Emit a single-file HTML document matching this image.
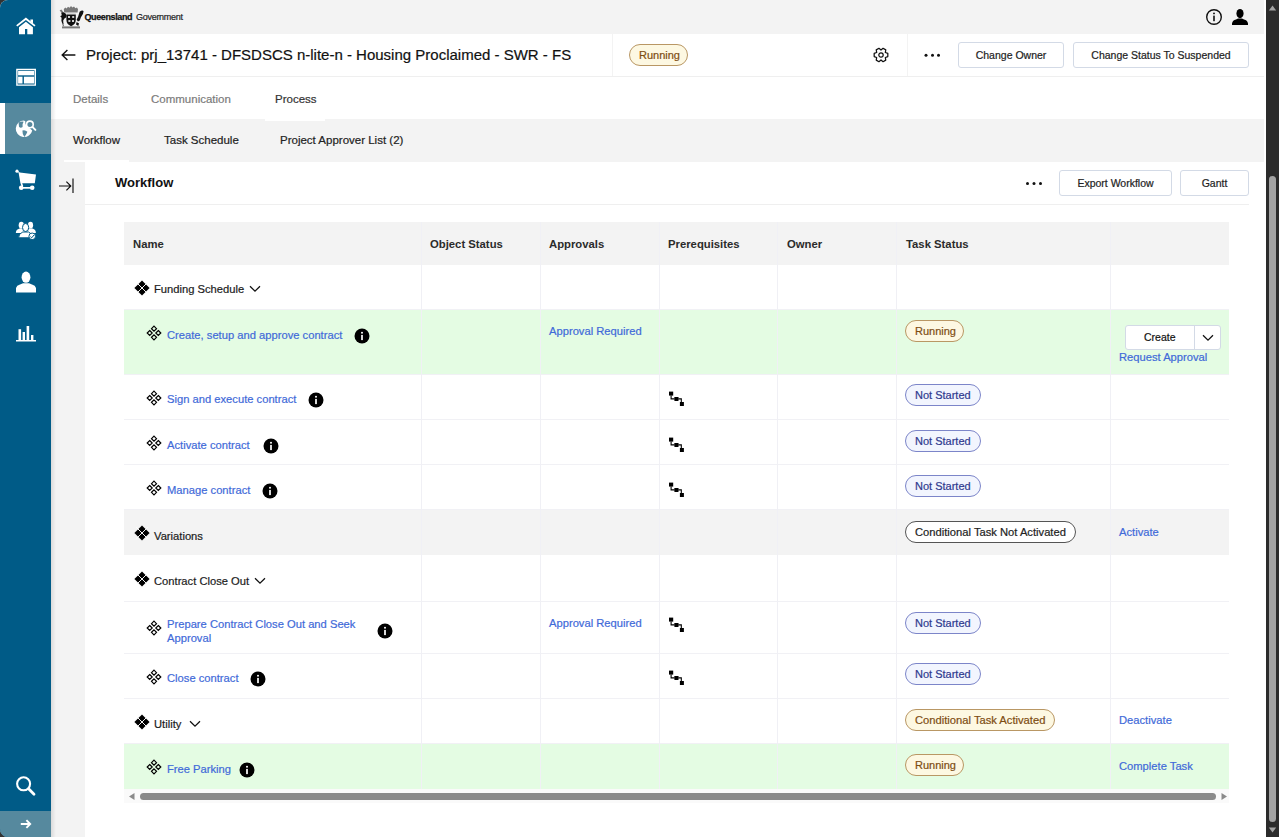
<!DOCTYPE html><html><head><meta charset='utf-8'><style>
*{box-sizing:border-box}
html,body{margin:0;padding:0}
body{width:1279px;height:837px;overflow:hidden;position:relative;background:#333;font-family:'Liberation Sans',sans-serif;color:#222;-webkit-text-stroke:0.2px currentColor}
.abs{position:absolute}
.t{position:absolute;white-space:nowrap;line-height:1}
.lk{color:#3f6ad9}
.badge{position:absolute;height:22px;border-radius:11px;border:1px solid;font-size:11px;line-height:20px;padding:0 9px;white-space:nowrap}
.run{background:#fdf8e2;border-color:#b99764;color:#7e4d12}
.ns{background:#f2f5fe;border-color:#7c85c9;color:#2f3a8f}
.cna{background:#fff;border-color:#555;color:#222}
.btn{position:absolute;background:#fff;border:1px solid #d3dae6;border-radius:3px;font-size:10.5px;color:#222;text-align:center}
.vl{position:absolute;width:1px;background:#f0f0f5}
.hl{position:absolute;height:1px;background:#f1f1f5}
</style></head><body>
<div class='abs' style='left:0;top:0;width:1279px;height:837px;background:#fff;border-radius:8px 0 0 8px'></div>
<div class='abs' style='left:51px;top:0;width:1213px;height:837px;background:#f3f3f3'></div>
<div class='abs' style='left:1264px;top:0;width:2px;height:837px;background:#fff'></div>
<div class='abs' style='left:51px;top:34px;width:1213px;height:42px;background:#fff'></div>
<div class='abs' style='left:51px;top:76px;width:1213px;height:1px;background:#efefef'></div>
<div class='abs' style='left:51px;top:77px;width:1213px;height:42px;background:#fff'></div>
<div class='abs' style='left:85px;top:162px;width:1179px;height:675px;background:#fff'></div>
<div class='abs' style='left:265px;top:119px;width:60px;height:1.5px;background:#fff'></div>
<div class='abs' style='left:64px;top:160px;width:65px;height:2px;background:#fff'></div>
<div class='abs' style='left:0;top:0;width:51px;height:837px;background:#005b87;border-radius:8px 0 0 8px;overflow:hidden'>
<div class='abs' style='left:0;top:103px;width:51px;height:51px;background:#56899e'></div>
<div class='abs' style='left:0;top:103px;width:5px;height:51px;background:#fff'></div>
<div class='abs' style='left:0;top:811px;width:51px;height:26px;background:#56899e'></div>
</div>
<div class='abs' style='left:51px;top:0;width:5px;height:837px;background:linear-gradient(90deg,rgba(0,0,0,.10),rgba(0,0,0,0))'></div>

<svg class='abs' style='left:0;top:0' width='51' height='837' viewBox='0 0 51 837'>
 <g fill='#fff' stroke='none'>
  <!-- home -->
  <path d='M16.2 25.2 L25.9 17.6 L35.5 25.2 L34.4 26.6 L25.9 20 L17.3 26.6 Z'/>
  <path d='M30.4 19.4 H33 V23.4 L30.4 21.4 Z'/>
  <path d='M19 27.2 L25.9 21.8 L32.9 27.2 V34.3 H27.3 V29 H25 V34.3 H19 Z'/>
  <!-- layout -->
  <path fill-rule='evenodd' d='M16.2 68.8 H36 V85.8 H16.2 Z M17.6 70.2 V84.4 H34.6 V70.2 Z'/>
  <rect x='18.1' y='71' width='16' height='4.3'/>
  <rect x='18.1' y='76.7' width='4.4' height='6.8'/>
  <rect x='23.9' y='76.7' width='10.2' height='6.8'/>
  <!-- cart -->
  <circle cx='17' cy='171.2' r='1.6'/>
  <path d='M17 170.4 L19.8 172.6 L36 174.4 L34.8 183.2 L22.2 183.2 L23.2 186 L21.6 186.6 L20.4 183 L18.6 172.8 Z'/>
  <circle cx='21.2' cy='187.8' r='2.3'/>
  <circle cx='32.2' cy='187.8' r='2.3'/>
  <rect x='21' y='187' width='11' height='1.7'/>
  <!-- people -->
  <ellipse cx='21.3' cy='225.2' rx='2.6' ry='3.4'/>
  <path d='M15.8 233 Q16 229.6 19.5 228.6 L23.5 228.6 Q26 229.6 26 233 Z'/>
  <ellipse cx='30.5' cy='225.2' rx='2.6' ry='3.4'/>
  <path d='M25.8 233 Q26 229.6 28.7 228.6 L32.6 228.6 Q35.8 229.6 35.9 233 Z'/>
  <ellipse cx='25.6' cy='227.5' rx='3.1' ry='4' stroke='#005b87' stroke-width='1'/>
  <path d='M18.5 237.8 Q18.8 233.4 22.8 232 L28.6 232 Q32.4 233.4 32.7 237.8 Z' stroke='#005b87' stroke-width='1'/>
  <circle cx='32.2' cy='236.3' r='3.3' stroke='#005b87' stroke-width='1'/>
  <path d='M30.4 236.6 L31.7 237.8 L34 235' fill='none' stroke='#005b87' stroke-width='1'/>
  <!-- user -->
  <ellipse cx='26' cy='277.2' rx='4.4' ry='5.6'/>
  <path d='M16 292.6 V288 Q16.6 285.6 20 284.6 L23 283.3 H29 L32 284.6 Q35.4 285.6 36 288 V292.6 Z'/>
  <!-- chart -->
  <rect x='16' y='340' width='20' height='1.5'/>
  <rect x='18.5' y='329.2' width='2.6' height='11'/>
  <rect x='22.6' y='332' width='2.4' height='8.5'/>
  <rect x='26.6' y='326' width='2.6' height='14.5'/>
  <rect x='31' y='335' width='2.4' height='5.5'/>
 </g>
 <g fill='none' stroke='#fff'>
  <!-- search -->
  <circle cx='23.6' cy='783.8' r='6.5' stroke-width='2.1'/>
  <path d='M28.6 788.8 L34 794.2' stroke-width='2.8' stroke-linecap='round'/>
  <!-- arrow -->
  <path d='M20.8 824 H30.2 M26.4 820.2 L30.2 824 L26.4 827.8' stroke-width='1.9'/>
  <!-- globe magnifier -->
  <circle cx='29.9' cy='124.4' r='3.3' stroke-width='1.6'/>
  <path d='M32.4 126.9 L35.4 129.9' stroke-width='2' stroke-linecap='round'/>
 </g>
 <path fill='#fff' d='M24 120.5 A8.3 8.3 0 1 0 32.2 130.4 L27.6 126.2 A4.6 4.6 0 0 1 25.4 121.4 Z'/>
 <path fill='#56899e' d='M18.6 122.6 Q21.5 121 23.6 121.8 Q22 124 22.6 127 Q20.6 128.6 19 126.8 Z M22.4 130.6 Q25 129.6 27.4 131.8 Q26.4 134.6 24.4 137 Q22.2 134 22.4 130.6 Z'/>
</svg>

<svg class='abs' style='left:57px;top:4px' width='30' height='27' viewBox='0 0 30 27'>
<g fill='#777'>
<path d='M7.2 8.4 L6.8 5 L8.4 3.6 L9.6 4.6 L11 2.8 L12.6 3.8 L14 2 L15.4 3.6 L17 2.6 L18.4 4.2 L20 3.4 L21 5.2 L20.6 8.4 Z'/>
<path d='M2.6 6.4 L4.4 5.6 L6.6 8.6 L5.4 9.6 Z'/>
<path d='M5 22.4 H23 V24.4 H5 Z'/>
<path d='M5.4 19 Q4.8 21.6 6.4 22.6 L7.2 21.8 Q6.2 20.8 6.8 19 Z'/>
<path d='M21.6 19 Q22.6 21.4 21.2 22.6 L20.4 21.8 Q21.2 20.6 20.6 19 Z'/>
</g>
<g fill='#111'>
<path d='M4.2 8.8 L6.4 8.2 L8.6 9.6 L9.6 11.6 L9 13.6 L7.4 14.4 L6.2 16.6 L6.4 19.4 L5.2 19.6 L4.4 16.8 L4.6 13.8 L3.2 12.2 L4.8 11.2 Z'/>
<path d='M22.6 7.8 Q25.4 5.6 26.6 7.2 Q26.4 10.6 23.8 13.4 L22.8 16.4 L21 17.6 L19.6 15.8 L21.2 12.6 Z'/>
<path d='M9.4 10.4 H18.8 V15.6 Q18.8 20.6 14.1 22.2 Q9.4 20.6 9.4 15.6 Z'/>
<path d='M19.6 18 L22 19.6 L20.8 21.4 L19 20.4 Z'/>
</g>
<g fill='#cfcfcf'>
<path d='M11 12 h2 v2 h-2 Z M15.2 12 h2 v2 h-2 Z M11.4 16 h2 v2 h-2 Z M15 16 h2 v2 h-2 Z'/>
<rect x='9.4' y='8.8' width='9.4' height='0.9'/>
</g>
</svg>
<span class='t' style='left:84.5px;top:13px;font-size:9px;font-weight:bold;color:#111;letter-spacing:-0.38px;-webkit-text-stroke:0.25px'>Queensland</span>
<span class='t' style='left:136px;top:13px;font-size:9px;color:#222;letter-spacing:-0.28px'>Government</span>
<svg class='abs' style='left:1204px;top:7px' width='20' height='20' viewBox='0 0 20 20'>
<circle cx='10' cy='10' r='7.3' fill='none' stroke='#111' stroke-width='1.4'/>
<rect x='9.2' y='8.6' width='1.6' height='5.6' fill='#111'/><circle cx='10' cy='6.4' r='0.95' fill='#111'/></svg>
<svg class='abs' style='left:1230px;top:8px' width='20' height='18' viewBox='0 0 20 18'>
<ellipse cx='10' cy='5.6' rx='3.6' ry='4.6' fill='#000'/>
<path d='M2 17 V15.4 Q2.6 12.4 6 11.6 L8 10.6 H12 L14 11.6 Q17.4 12.4 18 15.4 V17 Z' fill='#000'/></svg>
<svg class='abs' style='left:60px;top:48px' width='17' height='14' viewBox='0 0 17 14'>
<path d='M15.4 7 H2.4 M7.4 2 L2.2 7 L7.4 12' fill='none' stroke='#111' stroke-width='1.4'/></svg>
<span class='t' style='left:86px;top:47px;font-size:15px;color:#111'>Project: prj_13741 - DFSDSCS n-lite-n - Housing Proclaimed - SWR - FS</span>
<div class='vl' style='left:612px;top:34px;height:42px;background:#f3f3f3'></div>
<div class='vl' style='left:907px;top:34px;height:42px;background:#f3f3f3'></div>
<div class='badge run' style='left:629px;top:44px;width:59px'>Running</div>
<svg class='abs' style='left:872px;top:46px' width='18' height='18' viewBox='0 0 18 18'>
<path fill='none' stroke='#111' stroke-width='1.25' stroke-linejoin='round' d='M13.33 6.50 L15.82 7.43 L15.82 10.57 L13.33 11.50 L13.77 14.12 L11.05 15.69 L9.00 14.00 L6.95 15.69 L4.23 14.12 L4.67 11.50 L2.18 10.57 L2.18 7.43 L4.67 6.50 L4.23 3.88 L6.95 2.31 L9.00 4.00 L11.05 2.31 L13.77 3.88 Z'/>
<circle cx='9' cy='9' r='2.2' fill='none' stroke='#111' stroke-width='1.2'/></svg>
<svg class='abs' style='left:920px;top:50px' width='24' height='10' viewBox='0 0 24 10'>
<circle cx='6' cy='5.2' r='1.5' fill='#111'/><circle cx='12.5' cy='5.2' r='1.5' fill='#111'/><circle cx='18.5' cy='5.2' r='1.5' fill='#111'/></svg>
<div class='btn' style='left:958px;top:42px;width:106px;height:26px;line-height:24px'>Change Owner</div>
<div class='btn' style='left:1073px;top:42px;width:176px;height:26px;line-height:24px'>Change Status To Suspended</div>
<span class='t' style='left:73px;top:94px;font-size:11.5px;color:#7b7b7b'>Details</span>
<span class='t' style='left:151px;top:94px;font-size:11.5px;color:#7b7b7b'>Communication</span>
<span class='t' style='left:275px;top:94px;font-size:11.5px;color:#333'>Process</span>
<span class='t' style='left:73px;top:135px;font-size:11.5px;color:#222'>Workflow</span>
<span class='t' style='left:164px;top:135px;font-size:11.5px;color:#222'>Task Schedule</span>
<span class='t' style='left:280px;top:135px;font-size:11.5px;color:#222'>Project Approver List (2)</span>
<svg class='abs' style='left:57px;top:177px' width='18' height='17' viewBox='0 0 18 17'>
<path d='M2 9 H13.6 M9.4 4.6 L13.8 9 L9.4 13.4 M16 1.6 V16' fill='none' stroke='#111' stroke-width='1.15'/></svg>
<span class='t' style='left:115px;top:176px;font-size:13px;font-weight:bold;color:#111;-webkit-text-stroke:0'>Workflow</span>
<svg class='abs' style='left:1022px;top:178px' width='24' height='10' viewBox='0 0 24 10'>
<circle cx='5.5' cy='5.5' r='1.5' fill='#111'/><circle cx='12' cy='5.5' r='1.5' fill='#111'/><circle cx='18.5' cy='5.5' r='1.5' fill='#111'/></svg>
<div class='btn' style='left:1059px;top:170px;width:113px;height:26px;line-height:24px'>Export Workflow</div>
<div class='btn' style='left:1180px;top:170px;width:69px;height:26px;line-height:24px'>Gantt</div>
<div class='hl' style='left:85px;top:204px;width:1164px;background:#efefef'></div>
<div class='abs' style='left:124px;top:222px;width:1105px;height:43px;background:#f3f3f3'></div>
<span class='t' style='left:133px;top:239px;font-size:11.3px;font-weight:bold;color:#2b2b2b;-webkit-text-stroke:0'>Name</span>
<span class='t' style='left:430px;top:239px;font-size:11.3px;font-weight:bold;color:#2b2b2b;-webkit-text-stroke:0'>Object Status</span>
<span class='t' style='left:549px;top:239px;font-size:11.3px;font-weight:bold;color:#2b2b2b;-webkit-text-stroke:0'>Approvals</span>
<span class='t' style='left:668px;top:239px;font-size:11.3px;font-weight:bold;color:#2b2b2b;-webkit-text-stroke:0'>Prerequisites</span>
<span class='t' style='left:787px;top:239px;font-size:11.3px;font-weight:bold;color:#2b2b2b;-webkit-text-stroke:0'>Owner</span>
<span class='t' style='left:906px;top:239px;font-size:11.3px;font-weight:bold;color:#2b2b2b;-webkit-text-stroke:0'>Task Status</span>
<div class='abs' style='left:124px;top:310px;width:1105px;height:65px;background:#e4fce3'></div>
<div class='abs' style='left:124px;top:510px;width:1105px;height:45px;background:#f3f3f3'></div>
<div class='abs' style='left:124px;top:744px;width:1105px;height:45px;background:#e4fce3'></div>
<div class='hl' style='left:124px;top:309px;width:1105px'></div>
<div class='hl' style='left:124px;top:374px;width:1105px'></div>
<div class='hl' style='left:124px;top:419px;width:1105px'></div>
<div class='hl' style='left:124px;top:464px;width:1105px'></div>
<div class='hl' style='left:124px;top:509px;width:1105px'></div>
<div class='hl' style='left:124px;top:601px;width:1105px'></div>
<div class='hl' style='left:124px;top:653px;width:1105px'></div>
<div class='hl' style='left:124px;top:698px;width:1105px'></div>
<div class='hl' style='left:124px;top:743px;width:1105px'></div>
<div class='vl' style='left:421px;top:222px;height:567px'></div>
<div class='vl' style='left:540px;top:222px;height:567px'></div>
<div class='vl' style='left:659px;top:222px;height:567px'></div>
<div class='vl' style='left:777px;top:222px;height:567px'></div>
<div class='vl' style='left:896px;top:222px;height:567px'></div>
<div class='vl' style='left:1110px;top:222px;height:567px'></div>
<svg class='abs' style='left:133.6px;top:279.9px' width='16' height='16' viewBox='0 0 16 16'><path fill='#000' d='M8 0.4 L15.6 8 L8 15.6 L0.4 8 Z'/><path d='M8 0 V16 M0 8 H16' stroke='#fff' stroke-width='0.9' transform='rotate(45 8 8)'/></svg>
<span class='t' style='left:154px;top:284px;font-size:11.2px;color:#1c1c1c'>Funding Schedule</span>
<svg class='abs' style='left:249px;top:284.5px' width='12' height='8' viewBox='0 0 12 8'><path d='M1 1.2 L6 6.2 L11 1.2' fill='none' stroke='#111' stroke-width='1.25'/></svg>
<svg class='abs' style='left:145.8px;top:324.7px' width='16' height='16' viewBox='0 0 16 16'><g fill='none' stroke='#000' stroke-width='1.2'><path d='M8 1.20 L10.50 3.7 L8 6.20 L5.50 3.7 Z'/><path d='M8 9.80 L10.50 12.3 L8 14.80 L5.50 12.3 Z'/><path d='M3.7 5.50 L6.20 8 L3.7 10.50 L1.20 8 Z'/><path d='M12.3 5.50 L14.80 8 L12.3 10.50 L9.80 8 Z'/></g></svg>
<span class='t lk' style='left:167px;top:330px;font-size:11.2px'>Create, setup and approve contract</span>
<svg class='abs' style='left:354px;top:327.6px' width='16' height='16' viewBox='0 0 16 16'><circle cx='8' cy='8' r='7.5' fill='#000'/><rect x='7.15' y='6.9' width='1.7' height='5.2' fill='#fff'/><circle cx='8' cy='4.8' r='1' fill='#fff'/></svg>
<span class='t lk' style='left:549px;top:326px;font-size:11.2px'>Approval Required</span>
<div class='badge run' style='left:905px;top:320.3px;width:59px'>Running</div>
<div class='btn' style='left:1125px;top:324.5px;width:96px;height:25px'></div>
<div class='vl' style='left:1194px;top:325px;height:24px;background:#d3dae6'></div>
<span class='t' style='left:1144px;top:332px;font-size:10.5px;color:#111'>Create</span>
<svg class='abs' style='left:1202px;top:334px' width='12' height='8' viewBox='0 0 12 8'><path d='M1 1.2 L6 6.2 L11 1.2' fill='none' stroke='#111' stroke-width='1.25'/></svg>
<span class='t lk' style='left:1119px;top:352px;font-size:11.2px'>Request Approval</span>
<svg class='abs' style='left:145.8px;top:389.7px' width='16' height='16' viewBox='0 0 16 16'><g fill='none' stroke='#000' stroke-width='1.2'><path d='M8 1.20 L10.50 3.7 L8 6.20 L5.50 3.7 Z'/><path d='M8 9.80 L10.50 12.3 L8 14.80 L5.50 12.3 Z'/><path d='M3.7 5.50 L6.20 8 L3.7 10.50 L1.20 8 Z'/><path d='M12.3 5.50 L14.80 8 L12.3 10.50 L9.80 8 Z'/></g></svg>
<span class='t lk' style='left:167px;top:394px;font-size:11.2px'>Sign and execute contract</span>
<svg class='abs' style='left:308.4px;top:391.6px' width='16' height='16' viewBox='0 0 16 16'><circle cx='8' cy='8' r='7.5' fill='#000'/><rect x='7.15' y='6.9' width='1.7' height='5.2' fill='#fff'/><circle cx='8' cy='4.8' r='1' fill='#fff'/></svg>
<svg class='abs' style='left:668px;top:391px' width='16' height='16' viewBox='0 0 16 16'><g fill='#000'><rect x='1' y='0.6' width='4.2' height='4'/><rect x='6.3' y='6' width='4.3' height='3.9' rx='0.6'/><rect x='11.9' y='11' width='4' height='4'/></g><path d='M3.1 4.4 V7.9 H6.5 M10.4 7.9 H13.3 V11.2' fill='none' stroke='#000' stroke-width='1.1'/></svg>
<div class='badge ns' style='left:905px;top:384.3px;width:76px'>Not Started</div>
<svg class='abs' style='left:145.8px;top:434.9px' width='16' height='16' viewBox='0 0 16 16'><g fill='none' stroke='#000' stroke-width='1.2'><path d='M8 1.20 L10.50 3.7 L8 6.20 L5.50 3.7 Z'/><path d='M8 9.80 L10.50 12.3 L8 14.80 L5.50 12.3 Z'/><path d='M3.7 5.50 L6.20 8 L3.7 10.50 L1.20 8 Z'/><path d='M12.3 5.50 L14.80 8 L12.3 10.50 L9.80 8 Z'/></g></svg>
<span class='t lk' style='left:167px;top:440px;font-size:11.2px'>Activate contract</span>
<svg class='abs' style='left:262.6px;top:437.6px' width='16' height='16' viewBox='0 0 16 16'><circle cx='8' cy='8' r='7.5' fill='#000'/><rect x='7.15' y='6.9' width='1.7' height='5.2' fill='#fff'/><circle cx='8' cy='4.8' r='1' fill='#fff'/></svg>
<svg class='abs' style='left:668px;top:437px' width='16' height='16' viewBox='0 0 16 16'><g fill='#000'><rect x='1' y='0.6' width='4.2' height='4'/><rect x='6.3' y='6' width='4.3' height='3.9' rx='0.6'/><rect x='11.9' y='11' width='4' height='4'/></g><path d='M3.1 4.4 V7.9 H6.5 M10.4 7.9 H13.3 V11.2' fill='none' stroke='#000' stroke-width='1.1'/></svg>
<div class='badge ns' style='left:905px;top:430.3px;width:76px'>Not Started</div>
<svg class='abs' style='left:145.8px;top:480.2px' width='16' height='16' viewBox='0 0 16 16'><g fill='none' stroke='#000' stroke-width='1.2'><path d='M8 1.20 L10.50 3.7 L8 6.20 L5.50 3.7 Z'/><path d='M8 9.80 L10.50 12.3 L8 14.80 L5.50 12.3 Z'/><path d='M3.7 5.50 L6.20 8 L3.7 10.50 L1.20 8 Z'/><path d='M12.3 5.50 L14.80 8 L12.3 10.50 L9.80 8 Z'/></g></svg>
<span class='t lk' style='left:167px;top:485px;font-size:11.2px'>Manage contract</span>
<svg class='abs' style='left:262.1px;top:482.6px' width='16' height='16' viewBox='0 0 16 16'><circle cx='8' cy='8' r='7.5' fill='#000'/><rect x='7.15' y='6.9' width='1.7' height='5.2' fill='#fff'/><circle cx='8' cy='4.8' r='1' fill='#fff'/></svg>
<svg class='abs' style='left:668px;top:482px' width='16' height='16' viewBox='0 0 16 16'><g fill='#000'><rect x='1' y='0.6' width='4.2' height='4'/><rect x='6.3' y='6' width='4.3' height='3.9' rx='0.6'/><rect x='11.9' y='11' width='4' height='4'/></g><path d='M3.1 4.4 V7.9 H6.5 M10.4 7.9 H13.3 V11.2' fill='none' stroke='#000' stroke-width='1.1'/></svg>
<div class='badge ns' style='left:905px;top:475.3px;width:76px'>Not Started</div>
<svg class='abs' style='left:133.6px;top:525.4px' width='16' height='16' viewBox='0 0 16 16'><path fill='#000' d='M8 0.4 L15.6 8 L8 15.6 L0.4 8 Z'/><path d='M8 0 V16 M0 8 H16' stroke='#fff' stroke-width='0.9' transform='rotate(45 8 8)'/></svg>
<span class='t' style='left:154px;top:531px;font-size:11.2px;color:#1c1c1c'>Variations</span>
<div class='badge cna' style='left:905px;top:521.3px;width:171px;font-size:11.2px'>Conditional Task Not Activated</div>
<span class='t lk' style='left:1119px;top:527px;font-size:11.2px'>Activate</span>
<svg class='abs' style='left:133.6px;top:571.1px' width='16' height='16' viewBox='0 0 16 16'><path fill='#000' d='M8 0.4 L15.6 8 L8 15.6 L0.4 8 Z'/><path d='M8 0 V16 M0 8 H16' stroke='#fff' stroke-width='0.9' transform='rotate(45 8 8)'/></svg>
<span class='t' style='left:154px;top:576px;font-size:11.2px;color:#1c1c1c'>Contract Close Out</span>
<svg class='abs' style='left:253.5px;top:576.5px' width='12' height='8' viewBox='0 0 12 8'><path d='M1 1.2 L6 6.2 L11 1.2' fill='none' stroke='#111' stroke-width='1.25'/></svg>
<svg class='abs' style='left:145.8px;top:620.1px' width='16' height='16' viewBox='0 0 16 16'><g fill='none' stroke='#000' stroke-width='1.2'><path d='M8 1.20 L10.50 3.7 L8 6.20 L5.50 3.7 Z'/><path d='M8 9.80 L10.50 12.3 L8 14.80 L5.50 12.3 Z'/><path d='M3.7 5.50 L6.20 8 L3.7 10.50 L1.20 8 Z'/><path d='M12.3 5.50 L14.80 8 L12.3 10.50 L9.80 8 Z'/></g></svg>
<span class='t lk' style='left:167px;top:618px;font-size:11.2px;line-height:13.6px;white-space:normal;width:200px'>Prepare Contract Close Out and Seek<br>Approval</span>
<svg class='abs' style='left:377px;top:622.6px' width='16' height='16' viewBox='0 0 16 16'><circle cx='8' cy='8' r='7.5' fill='#000'/><rect x='7.15' y='6.9' width='1.7' height='5.2' fill='#fff'/><circle cx='8' cy='4.8' r='1' fill='#fff'/></svg>
<span class='t lk' style='left:549px;top:618px;font-size:11.2px'>Approval Required</span>
<svg class='abs' style='left:668px;top:616.5px' width='16' height='16' viewBox='0 0 16 16'><g fill='#000'><rect x='1' y='0.6' width='4.2' height='4'/><rect x='6.3' y='6' width='4.3' height='3.9' rx='0.6'/><rect x='11.9' y='11' width='4' height='4'/></g><path d='M3.1 4.4 V7.9 H6.5 M10.4 7.9 H13.3 V11.2' fill='none' stroke='#000' stroke-width='1.1'/></svg>
<div class='badge ns' style='left:905px;top:611.6px;width:76px'>Not Started</div>
<svg class='abs' style='left:145.8px;top:668.5px' width='16' height='16' viewBox='0 0 16 16'><g fill='none' stroke='#000' stroke-width='1.2'><path d='M8 1.20 L10.50 3.7 L8 6.20 L5.50 3.7 Z'/><path d='M8 9.80 L10.50 12.3 L8 14.80 L5.50 12.3 Z'/><path d='M3.7 5.50 L6.20 8 L3.7 10.50 L1.20 8 Z'/><path d='M12.3 5.50 L14.80 8 L12.3 10.50 L9.80 8 Z'/></g></svg>
<span class='t lk' style='left:167px;top:673px;font-size:11.2px'>Close contract</span>
<svg class='abs' style='left:249.60000000000002px;top:670.6px' width='16' height='16' viewBox='0 0 16 16'><circle cx='8' cy='8' r='7.5' fill='#000'/><rect x='7.15' y='6.9' width='1.7' height='5.2' fill='#fff'/><circle cx='8' cy='4.8' r='1' fill='#fff'/></svg>
<svg class='abs' style='left:668px;top:670px' width='16' height='16' viewBox='0 0 16 16'><g fill='#000'><rect x='1' y='0.6' width='4.2' height='4'/><rect x='6.3' y='6' width='4.3' height='3.9' rx='0.6'/><rect x='11.9' y='11' width='4' height='4'/></g><path d='M3.1 4.4 V7.9 H6.5 M10.4 7.9 H13.3 V11.2' fill='none' stroke='#000' stroke-width='1.1'/></svg>
<div class='badge ns' style='left:905px;top:663.3px;width:76px'>Not Started</div>
<svg class='abs' style='left:133.6px;top:713.6px' width='16' height='16' viewBox='0 0 16 16'><path fill='#000' d='M8 0.4 L15.6 8 L8 15.6 L0.4 8 Z'/><path d='M8 0 V16 M0 8 H16' stroke='#fff' stroke-width='0.9' transform='rotate(45 8 8)'/></svg>
<span class='t' style='left:154px;top:719px;font-size:11.2px;color:#1c1c1c'>Utility</span>
<svg class='abs' style='left:188.5px;top:719.5px' width='12' height='8' viewBox='0 0 12 8'><path d='M1 1.2 L6 6.2 L11 1.2' fill='none' stroke='#111' stroke-width='1.25'/></svg>
<div class='badge run' style='left:905px;top:709.3px;width:150px;font-size:11.2px'>Conditional Task Activated</div>
<span class='t lk' style='left:1119px;top:715px;font-size:11.2px'>Deactivate</span>
<svg class='abs' style='left:145.8px;top:759.4px' width='16' height='16' viewBox='0 0 16 16'><g fill='none' stroke='#000' stroke-width='1.2'><path d='M8 1.20 L10.50 3.7 L8 6.20 L5.50 3.7 Z'/><path d='M8 9.80 L10.50 12.3 L8 14.80 L5.50 12.3 Z'/><path d='M3.7 5.50 L6.20 8 L3.7 10.50 L1.20 8 Z'/><path d='M12.3 5.50 L14.80 8 L12.3 10.50 L9.80 8 Z'/></g></svg>
<span class='t lk' style='left:167px;top:764px;font-size:11.2px'>Free Parking</span>
<svg class='abs' style='left:239.3px;top:761.6px' width='16' height='16' viewBox='0 0 16 16'><circle cx='8' cy='8' r='7.5' fill='#000'/><rect x='7.15' y='6.9' width='1.7' height='5.2' fill='#fff'/><circle cx='8' cy='4.8' r='1' fill='#fff'/></svg>
<div class='badge run' style='left:905px;top:754.3px;width:59px'>Running</div>
<span class='t lk' style='left:1119px;top:761px;font-size:11.2px'>Complete Task</span>
<div class='abs' style='left:124px;top:789px;width:1105px;height:14px;background:#fafafa'></div>
<div class='abs' style='left:140px;top:792.5px;width:1076px;height:7.5px;border-radius:4px;background:#8a8a8a'></div>
<svg class='abs' style='left:128px;top:792px' width='8' height='9'><path d='M6.5 1 V8 L1 4.5 Z' fill='#8a8a8a'/></svg>
<svg class='abs' style='left:1220px;top:792px' width='8' height='9'><path d='M1.5 1 V8 L7 4.5 Z' fill='#8a8a8a'/></svg>
<div class='abs' style='left:1266px;top:0;width:13px;height:837px;background:#2b2b2b'></div>
<div class='abs' style='left:1269px;top:176px;width:7px;height:646px;border-radius:3.5px;background:#a3a3a3'></div>
<svg class='abs' style='left:1266px;top:4px' width='13' height='8'><path d='M2.8 6.5 L6.5 1.6 L10.2 6.5 Z' fill='#a3a3a3'/></svg>
<svg class='abs' style='left:1266px;top:826px' width='13' height='8'><path d='M2.8 1.5 L6.5 6.4 L10.2 1.5 Z' fill='#a3a3a3'/></svg>
</body></html>
